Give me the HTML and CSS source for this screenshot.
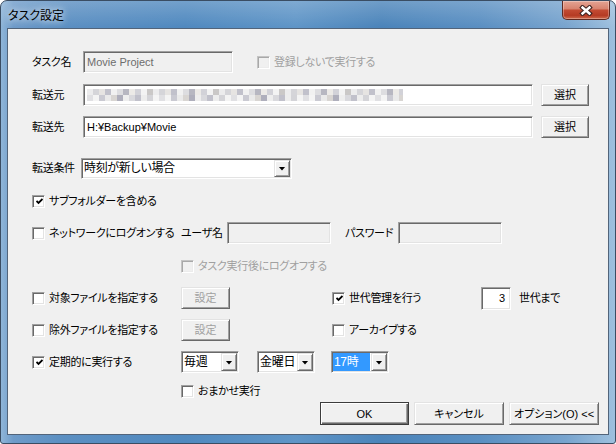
FILE: index.html
```html
<!DOCTYPE html>
<html lang="ja">
<head>
    <meta charset="UTF-8">
    <meta name="viewport" content="width=device-width, initial-scale=1.0">
    <title>タスク設定</title>
    <link rel="stylesheet" href="styles.css">
</head>
<body>
    <div class="window">
        <div class="titlebar">
            <span class="title">タスク設定</span>
            <div class="close">
                <svg width="14" height="11" viewBox="0 0 14 11">
                    <path d="M3.5 2.5 L10.5 8.5 M10.5 2.5 L3.5 8.5" stroke="#3f2522" stroke-width="4.6" stroke-linecap="square" fill="none"/>
                    <path d="M3.5 2.5 L10.5 8.5 M10.5 2.5 L3.5 8.5" stroke="#fff" stroke-width="2.4" stroke-linecap="square" fill="none"/>
                </svg>
            </div>
        </div>
        <div class="client">
            <div class="rows">
                <div class="row">
                    <span class="label">タスク名</span>
                    <div class="field disabled task-name">Movie Project</div>
                    <label class="check disabled no-register"><span class="box"></span>登録しないで実行する</label>
                </div>
                <div class="row nudge">
                    <span class="label">転送元</span>
                    <div class="field path"><span class="blur"></span></div>
                    <button class="btn pick">選択</button>
                </div>
                <div class="row">
                    <span class="label">転送先</span>
                    <div class="field path">H:¥Backup¥Movie</div>
                    <button class="btn pick">選択</button>
                </div>
                <div class="row section">
                    <span class="label short">転送条件</span>
                    <div class="select condition">
                        <span class="value">時刻が新しい場合</span>
                        <span class="arrow"></span>
                    </div>
                </div>
                <div class="row nudge">
                    <label class="check on"><span class="box"><svg width="7" height="7" viewBox="0 0 7 7"><path d="M0.5 3 L2.5 5 L6.5 1" stroke="#000" stroke-width="1.8" fill="none"/></svg></span>サブフォルダーを含める</label>
                </div>
                <div class="row">
                    <div class="cell-a">
                        <label class="check"><span class="box"></span>ネットワークにログオンする</label>
                    </div>
                    <span class="caption user">ユーザ名</span>
                    <div class="field disabled login"></div>
                    <span class="caption pass">パスワード</span>
                    <div class="field disabled login"></div>
                </div>
                <div class="row nudge">
                    <div class="cell-a"></div>
                    <label class="check disabled"><span class="box"></span>タスク実行後にログオフする</label>
                </div>
                <div class="row">
                    <div class="cell-a">
                        <label class="check"><span class="box"></span>対象ファイルを指定する</label>
                    </div>
                    <div class="cell-b">
                        <button class="btn small" disabled>設定</button>
                    </div>
                    <div class="cell-c">
                        <label class="check on"><span class="box"><svg width="7" height="7" viewBox="0 0 7 7"><path d="M0.5 3 L2.5 5 L6.5 1" stroke="#000" stroke-width="1.8" fill="none"/></svg></span>世代管理を行う</label>
                    </div>
                    <div class="field gen">3</div>
                    <span class="caption gen-label">世代まで</span>
                </div>
                <div class="row">
                    <div class="cell-a">
                        <label class="check"><span class="box"></span>除外ファイルを指定する</label>
                    </div>
                    <div class="cell-b">
                        <button class="btn small" disabled>設定</button>
                    </div>
                    <div class="cell-c">
                        <label class="check"><span class="box"></span>アーカイブする</label>
                    </div>
                </div>
                <div class="row">
                    <div class="cell-a">
                        <label class="check on"><span class="box"><svg width="7" height="7" viewBox="0 0 7 7"><path d="M0.5 3 L2.5 5 L6.5 1" stroke="#000" stroke-width="1.8" fill="none"/></svg></span>定期的に実行する</label>
                    </div>
                    <div class="select sched">
                        <span class="value">毎週</span>
                        <span class="arrow"></span>
                    </div>
                    <div class="select sched day">
                        <span class="value">金曜日</span>
                        <span class="arrow"></span>
                    </div>
                    <div class="select sched hour">
                        <span class="value"><span class="hilite">17時</span></span>
                        <span class="arrow"></span>
                    </div>
                </div>
                <div class="row last">
                    <div class="cell-a"></div>
                    <label class="check"><span class="box"></span>おまかせ実行</label>
                </div>
            </div>
            <div class="buttons">
                <button class="btn wide default">OK</button>
                <button class="btn wide">キャンセル</button>
                <button class="btn wide">オプション(O) &lt;&lt;</button>
            </div>
        </div>
    </div>
</body>
</html>
```

FILE: styles.css
```css
* {
    box-sizing: border-box;
}
html, body {
    margin: 0;
    background: #fff;
}
body {
    font-family: "Liberation Sans", "Noto Sans CJK JP", sans-serif;
    font-size: 11px;
    letter-spacing: -0.3px;
    font-feature-settings: "palt";
    color: #000;
    line-height: 14px;
}
.window {
    width: 616px;
    height: 444px;
    border: 1px solid #3a4d63;
    border-radius: 7px 7px 3px 3px;
    background:
        linear-gradient(180deg, rgba(255,255,255,0.2), rgba(255,255,255,0) 26px),
        linear-gradient(90deg, #8fb5d8 0, #6e9bc9 2%, #5b8fc2 10%, #5089bf 30%, #5f95c7 48%, #4b84ba 62%, #5a8fc2 78%, #78a4ce 92%, #9ec0de 100%);
    display: flex;
    flex-direction: column;
    overflow: hidden;
}
.titlebar {
    height: 27px;
    display: flex;
    align-items: flex-start;
}
.title {
    font-family: "Noto Sans CJK JP", sans-serif;
    font-size: 12px;
    letter-spacing: 0;
    padding-left: 7px;
    margin-top: 7px;
    text-shadow: 0 0 6px rgba(255,255,255,0.8), 0 0 10px rgba(255,255,255,0.6);
}
.close {
    margin-left: auto;
    margin-right: 5px;
    width: 48px;
    height: 19px;
    border: 1px solid #5e2a22;
    border-top: none;
    border-radius: 0 0 5px 5px;
    background: linear-gradient(180deg, #e4a494 0%, #d88470 42%, #c24a32 52%, #b53b24 80%, #cf6a4c 100%);
    box-shadow: inset 0 0 0 1px rgba(255,255,255,0.3);
    display: flex;
    align-items: center;
    justify-content: center;
}
.client {
    margin: 0 6px;
    height: 407px;
    background: #f0f0f0;
    border: 1px solid #52647a;
    padding: 22px 9px 0 24px;
}
.rows {
    display: flex;
    flex-direction: column;
    gap: 10px;
}
.row {
    display: flex;
    align-items: center;
    height: 22px;
}
.row.nudge {
    margin-top: 1px;
}
.row.section {
    margin-top: 9px;
}
.row.last {
    height: 16px;
}
.label {
    width: 51px;
    flex-shrink: 0;
    white-space: nowrap;
}
.label.short {
    width: 49px;
}
.cell-a {
    width: 149px;
    flex-shrink: 0;
}
.cell-b {
    width: 151px;
    flex-shrink: 0;
}
.cell-c {
    width: 149px;
    flex-shrink: 0;
}
.caption {
    flex-shrink: 0;
    white-space: nowrap;
}
.caption.user {
    width: 46px;
}
.caption.pass {
    width: 53px;
    margin-left: 14px;
}
.caption.gen-label {
    margin-left: 8px;
}

/* sunken edit boxes */
.field {
    height: 22px;
    background: #fff;
    border: 1px solid;
    border-color: #a0a0a0 #fff #fff #a0a0a0;
    box-shadow: inset 1px 1px 0 #696969, inset -1px -1px 0 #e3e3e3;
    padding: 0 2px 0 3px;
    display: flex;
    align-items: center;
    font-size: 11px;
    letter-spacing: 0;
    white-space: nowrap;
    flex-shrink: 0;
}
.field.disabled {
    background: #f0f0f0;
    color: #6d6d6d;
}
.task-name {
    width: 150px;
}
.path {
    width: 450px;
}
.login {
    width: 104px;
}
.field.gen {
    width: 30px;
    height: 23px;
    justify-content: flex-end;
    padding-right: 5px;
}
.blur {
    width: 316px;
    height: 12px;
    opacity: 0.7;
    background:
        repeating-linear-gradient(90deg, #e4e4e6 0 6px, #c4c4ca 6px 12px, #dcdad6 12px 18px, #a8a8b6 18px 24px, #ececec 24px 30px, #d0d0d4 30px 36px, #9a9aa8 36px 42px, #e4e2de 42px 48px, #c0c0c8 48px 54px, #eeeeee 54px 60px, #b4b2b0 60px 66px) top / 100% 6px no-repeat,
        repeating-linear-gradient(90deg, #d4d4d8 0 6px, #f0f0f0 6px 12px, #b4b4c0 12px 18px, #e2e2e2 18px 24px, #c8c4c0 24px 30px, #8e8ea0 30px 36px, #e8e8e8 36px 42px, #cacad0 42px 48px, #a8a8b6 48px 54px, #e6e6e6 54px 60px, #c2c2c8 60px 66px, #f0f0f0 66px 72px) bottom / 100% 6px no-repeat;
}

/* check boxes */
.check {
    display: flex;
    align-items: center;
    white-space: nowrap;
}
.check .box {
    width: 13px;
    height: 13px;
    margin-right: 4px;
    background: #fff;
    border: 1px solid;
    border-color: #a0a0a0 #fff #fff #a0a0a0;
    box-shadow: inset 1px 1px 0 #696969, inset -1px -1px 0 #e3e3e3;
    display: flex;
    align-items: center;
    justify-content: center;
    flex-shrink: 0;
}
.check .box svg {
    margin: 1px 0 0 1px;
}
.check.disabled {
    color: #a0a0a0;
}
.check.disabled .box {
    background: #f0f0f0;
    border-color: #c4c4c4 #fff #fff #c4c4c4;
    box-shadow: inset 1px 1px 0 #a8a8a8, inset -1px -1px 0 #ececec;
}
.no-register {
    margin-left: 24px;
}

/* combo boxes */
.select {
    display: flex;
    height: 21px;
    background: #fff;
    border: 1px solid;
    border-color: #a0a0a0 #fff #fff #a0a0a0;
    box-shadow: inset 1px 1px 0 #696969, inset -1px -1px 0 #e3e3e3;
    padding: 1px;
    flex-shrink: 0;
}
.select .value {
    flex: 1;
    display: flex;
    align-items: center;
    padding-left: 1px;
    font-size: 12px;
    white-space: nowrap;
    overflow: hidden;
}
.select .arrow {
    width: 16px;
    background: #f0f0f0;
    border: 1px solid;
    border-color: #e3e3e3 #696969 #696969 #e3e3e3;
    box-shadow: inset 1px 1px 0 #fff, inset -1px -1px 0 #a0a0a0;
    display: flex;
    align-items: center;
    justify-content: center;
}
.select .arrow::after {
    content: "";
    width: 7px;
    height: 4px;
    background: #000;
    clip-path: polygon(0 0, 100% 0, 50% 100%);
    margin-top: 1px;
}
.condition {
    width: 211px;
}
.sched {
    width: 58px;
    height: 22px;
}
.sched.day {
    margin-left: 18px;
}
.sched.hour {
    margin-left: 16px;
}
.hilite {
    background: #3399ff;
    color: #fff;
    width: 100%;
    height: 100%;
    display: flex;
    align-items: center;
    padding-left: 1px;
    margin-left: -1px;
}

/* push buttons */
.btn {
    font: inherit;
    color: #000;
    background: #f0f0f0;
    height: 22px;
    padding: 0;
    border: 1px solid;
    border-color: #e3e3e3 #696969 #696969 #e3e3e3;
    box-shadow: inset 1px 1px 0 #fff, inset -1px -1px 0 #a0a0a0;
    flex-shrink: 0;
}
.btn.pick {
    width: 48px;
    margin-left: 8px;
}
.btn.small {
    width: 49px;
}
.btn:disabled {
    color: #a0a0a0;
}
.buttons {
    display: flex;
    justify-content: flex-end;
    gap: 5px;
    margin-top: 3px;
}
.btn.wide {
    width: 90px;
    height: 23px;
}
.btn.default {
    width: 89px;
    border-color: #3c3c3c;
    box-shadow: inset 1px 1px 0 #fff, inset -1px -1px 0 #696969, inset -2px -2px 0 #a0a0a0;
}
```
